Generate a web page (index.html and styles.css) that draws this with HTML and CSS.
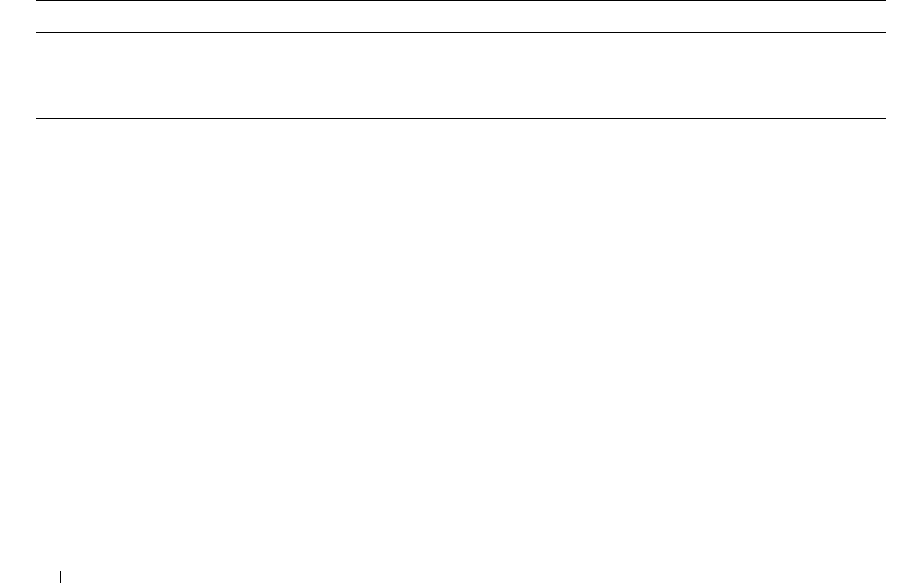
FILE: index.html
```html
<!DOCTYPE html>
<html>
<head>
    <title>Page</title>
    <link rel="stylesheet" href="styles.css">
</head>
<body>
    <div class="page">
        <table class="spec-table">
            <tr class="head-row"><td></td></tr>
            <tr class="body-row"><td></td></tr>
        </table>

        <div class="page-footer">
            <span class="footer-bar"></span>
        </div>
    </div>
</body>
</html>
```

FILE: styles.css
```css
body {
    background-color: white;
    color: black;
    font-family: 'Liberation Sans', sans-serif;
    margin: 0;
    padding: 0;
}

.page {
    display: flex;
    flex-direction: column;
    height: 585px;
    padding: 0 14px 0 36px;
    box-sizing: border-box;
}

.spec-table {
    width: 100%;
    border-collapse: collapse;
    border-top: 1px solid black;
}

.spec-table td {
    padding: 0;
}

.head-row td {
    height: 31px;
    border-bottom: 1px solid black;
}

.body-row td {
    height: 85px;
    border-bottom: 1px solid black;
}

.page-footer {
    margin-top: auto;
    padding-left: 24px;
    height: 14px;
}

.footer-bar {
    display: block;
    width: 1px;
    height: 12px;
    background-color: black;
}
```
